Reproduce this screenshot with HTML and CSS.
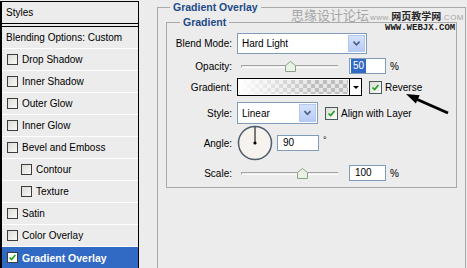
FILE: index.html
```html
<!DOCTYPE html>
<html lang="en">

<head>
  <meta charset="UTF-8">
  <title>Layer Style - Gradient Overlay</title>
  <link rel="stylesheet" href="styles.css">
</head>

<body>
  <div class="window">

    <div class="styles-list">
      <div class="head">Styles</div>
      <div class="blending">Blending Options: Custom</div>
      <div class="item"><span class="cb"></span>Drop Shadow</div>
      <div class="item"><span class="cb"></span>Inner Shadow</div>
      <div class="item"><span class="cb"></span>Outer Glow</div>
      <div class="item"><span class="cb"></span>Inner Glow</div>
      <div class="item"><span class="cb"></span>Bevel and Emboss</div>
      <div class="item sub"><span class="cb"></span>Contour</div>
      <div class="item sub"><span class="cb"></span>Texture</div>
      <div class="item"><span class="cb"></span>Satin</div>
      <div class="item"><span class="cb"></span>Color Overlay</div>
      <div class="item active">
        <span class="cb on"><svg viewBox="0 0 11 11"><path d="M2 5.5 L4.3 8 L9 2.5" /></svg></span>Gradient Overlay
      </div>
    </div>

    <div class="options">
      <fieldset class="group outer">
        <legend>Gradient Overlay</legend>
        <fieldset class="group inner">
          <legend>Gradient</legend>

          <div class="row r1">
            <label>Blend Mode:</label>
            <div class="select wide">
              <span class="value">Hard Light</span>
              <span class="drop"><svg viewBox="0 0 17 17"><path d="M5 6.5 L8.5 10 L12 6.5" /></svg></span>
            </div>
          </div>

          <div class="row r2">
            <label>Opacity:</label>
            <div class="slider">
              <div class="track"></div>
              <svg class="thumb" style="left: 48px" viewBox="0 0 11 11"><path d="M0.5 4.5 L5.5 0.5 L10.5 4.5 L10.5 10.5 L0.5 10.5 Z" /></svg>
            </div>
            <div class="field"><span class="sel">50</span></div>
            <span class="unit">%</span>
          </div>

          <div class="row r3">
            <label>Gradient:</label>
            <div class="gradient">
              <div class="preview"></div>
              <div class="gdrop"></div>
            </div>
            <span class="check"><svg viewBox="0 0 13 13"><path d="M3 6.5 L5.5 9 L10 3.5" /></svg></span>
            <span class="cap">Reverse</span>
          </div>

          <div class="row r4">
            <label>Style:</label>
            <div class="select narrow">
              <span class="value">Linear</span>
              <span class="drop"><svg viewBox="0 0 17 17"><path d="M5 6.5 L8.5 10 L12 6.5" /></svg></span>
            </div>
            <span class="check"><svg viewBox="0 0 13 13"><path d="M3 6.5 L5.5 9 L10 3.5" /></svg></span>
            <span class="cap">Align with Layer</span>
          </div>

          <div class="row r5">
            <label>Angle:</label>
            <svg class="dial" viewBox="0 0 36 36">
              <circle class="ring" cx="18" cy="18" r="16.5" />
              <line x1="18" y1="18" x2="18" y2="2" />
              <circle class="dot" cx="18" cy="18" r="1.6" />
            </svg>
            <div class="field angle">90</div>
            <span class="deg">°</span>
          </div>

          <div class="row r6">
            <label>Scale:</label>
            <div class="slider">
              <div class="track"></div>
              <svg class="thumb" style="left: 60px" viewBox="0 0 11 11"><path d="M0.5 4.5 L5.5 0.5 L10.5 4.5 L10.5 10.5 L0.5 10.5 Z" /></svg>
            </div>
            <div class="field">100</div>
            <span class="unit">%</span>
          </div>

        </fieldset>
      </fieldset>

      <div class="watermark">
        <div class="wm-line"><span class="wm-cn">思缘设计论坛</span><span class="wm-url">www.</span><span class="wm-dark">网页教学网</span><span class="wm-url">.COM</span></div>
        <div class="wm-en">WWW.WEBJX.COM</div>
      </div>

      <svg class="arrow" viewBox="0 0 50 28">
        <line x1="15" y1="9.5" x2="48" y2="24" />
        <polygon points="6,5 15.9,14.5 19.7,6.3" />
      </svg>
    </div>

  </div>
</body>

</html>
```

FILE: styles.css
```css
body {
  margin: 0;
  width: 467px;
  height: 268px;
  overflow: hidden;
  background: #ececec;
  font-family: "Liberation Sans", Arial, sans-serif;
  font-size: 10px;
  color: #000;
}

.window {
  display: flex;
  padding-top: 1px;
  height: 267px;
  overflow: hidden;
}

/* left list of effects */

.styles-list {
  width: 136px;
  border-left: 2px solid #000;
  border-right: 1px solid #000;
  border-top: 1px solid #000;
  background: #ececec;
}

.head {
  height: 21px;
  line-height: 21px;
  padding-left: 4px;
  border-bottom: 1px solid #000;
  margin-bottom: 2px;
}

.blending {
  height: 21px;
  line-height: 21px;
  padding-left: 4px;
  border-top: 1px solid #000;
}

.item {
  display: flex;
  align-items: center;
  height: 21px;
  padding-left: 5px;
  border-top: 1px solid #fff;
}

.item.sub {
  padding-left: 19px;
}

.item.active {
  background: #316ac5;
  color: #fff;
  font-weight: bold;
  font-size: 10.5px;
}

.cb {
  width: 9px;
  height: 9px;
  margin-right: 4px;
  border: 1px solid #3c3c3c;
  background: linear-gradient(135deg, #dcdcd6, #f8f8f6);
}

.cb.on {
  background: #fff;
}

.cb svg {
  display: block;
  width: 9px;
  height: 9px;
}

.cb path,
.check path {
  fill: none;
  stroke: #21a121;
  stroke-width: 2;
}

/* right side options */

.options {
  position: relative;
  flex: 1;
  padding-left: 18px;
  overflow: hidden;
}

.group {
  margin: 0;
  border: 1px solid #a9a9a9;
  min-width: 0;
}

.group legend {
  padding: 0 3px;
  font-weight: bold;
  font-size: 10.5px;
  line-height: 12px;
  color: #1c4a88;
}

.outer {
  width: 309px;
  box-sizing: border-box;
  height: 267px;
  padding: 0 8px;
  border-bottom: none;
}

.outer > legend {
  margin-left: 4px;
}

.inner {
  margin-top: 3px;
  padding: 5px 0 6px 0;
}

.inner > legend {
  margin-left: 13px;
}

.row {
  display: flex;
  align-items: center;
}

.row label {
  width: 65px;
  margin-right: 5px;
  text-align: right;
}

.r1 { height: 21px; }
.r2 { height: 16px; margin-top: 4px; }
.r3 { height: 18px; margin-top: 4px; }
.r4 { height: 22px; margin-top: 6px; }
.r5 { height: 36px; margin-top: 1px; }
.r6 { height: 16px; margin-top: 4px; }

.select {
  display: flex;
  align-items: center;
  height: 100%;
  box-sizing: border-box;
  border: 1px solid #7f9db9;
  background: #fff;
}

.select.wide {
  width: 130px;
}

.select.narrow {
  width: 81px;
}

.select .value {
  flex: 1;
  padding-left: 4px;
}

.select .drop {
  width: 17px;
  align-self: stretch;
  margin: 1px;
  background: linear-gradient(#d6e2fb, #b6cbf5);
  border: 1px solid #b4c8f0;
  box-sizing: border-box;
}

.select .drop svg {
  display: block;
  width: 100%;
  height: 100%;
}

.select .drop path {
  fill: none;
  stroke: #4d6185;
  stroke-width: 2;
}

.slider {
  position: relative;
  width: 112px;
  height: 100%;
  display: flex;
  align-items: center;
  padding: 0 11px 0 4px;
  box-sizing: border-box;
}

.track {
  flex: 1;
  height: 1px;
  border-top: 1px solid #a4a4a0;
  border-bottom: 1px solid #fff;
  border-left: 1px solid #a4a4a0;
}

.thumb {
  position: absolute;
  top: 3px;
  width: 11px;
  height: 11px;
}

.thumb path {
  fill: #e9f2e4;
  stroke: #8aa28a;
  stroke-width: 1;
}

.field {
  width: 37px;
  height: 16px;
  box-sizing: border-box;
  border: 1px solid #7f9db9;
  background: #fff;
  padding-left: 5px;
  line-height: 14px;
}

.field .sel {
  display: inline-block;
  margin-left: -4px;
  padding: 0 2px;
  background: #316ac5;
  color: #fff;
}

.field.angle {
  width: 42px;
  margin-left: 4px;
}

.unit {
  margin-left: 4px;
}

.deg {
  margin-left: 4px;
  align-self: flex-start;
  margin-top: 10px;
  font-size: 9px;
}

.gradient {
  display: flex;
  width: 125px;
  height: 100%;
  box-sizing: border-box;
  border: 1px solid #000;
}

.preview {
  flex: 1;
  border: 1px solid #fff;
  background:
    linear-gradient(to right, #fff 0%, rgba(255, 255, 255, 0) 70%),
    repeating-conic-gradient(#bdbdbd 0 25%, #e6e6e6 0 50%) 0 0 / 8px 8px;
}

.gdrop {
  position: relative;
  width: 11px;
  border-left: 1px solid #000;
  background: #fff;
}

.gdrop::after {
  content: "";
  position: absolute;
  left: 3px;
  top: 7px;
  border-left: 3px solid transparent;
  border-right: 3px solid transparent;
  border-top: 3px solid #000;
}

.check {
  width: 13px;
  height: 13px;
  margin-left: 7px;
  margin-right: 3px;
  box-sizing: border-box;
  border: 1px solid #4a5a58;
  background: linear-gradient(135deg, #dcdcd6, #fbfbf9);
}

.check svg {
  display: block;
  width: 11px;
  height: 11px;
}

.dial {
  width: 36px;
  height: 36px;
}

.dial .ring {
  fill: #f6f2ed;
  stroke: #4e5c6c;
  stroke-width: 1.5;
}

.dial line {
  stroke: #000;
  stroke-width: 1;
}

.dial .dot {
  fill: #000;
}

/* watermark and arrow laid over the dialog */

.watermark {
  position: absolute;
  left: 152px;
  top: 6px;
  color: #a6a6a6;
}

.wm-line {
  display: flex;
  align-items: baseline;
  height: 16px;
}

.wm-cn {
  font-family: "Noto Sans CJK SC", sans-serif;
  font-size: 13px;
  line-height: 16px;
  margin-right: 1px;
}

.wm-url {
  font-size: 8px;
  letter-spacing: 0.5px;
}

.wm-dark {
  font-family: "Noto Sans CJK SC", sans-serif;
  font-size: 10px;
  font-weight: bold;
  color: #2a2a2a;
}

.wm-en {
  margin-left: 94px;
  font-family: "Liberation Mono", monospace;
  font-weight: bold;
  font-size: 9px;
  line-height: 10px;
  color: #1a1a1a;
}

.arrow {
  position: absolute;
  left: 261px;
  top: 88px;
  width: 50px;
  height: 28px;
}

.arrow line {
  stroke: #000;
  stroke-width: 3;
}

.arrow polygon {
  fill: #000;
}
```
